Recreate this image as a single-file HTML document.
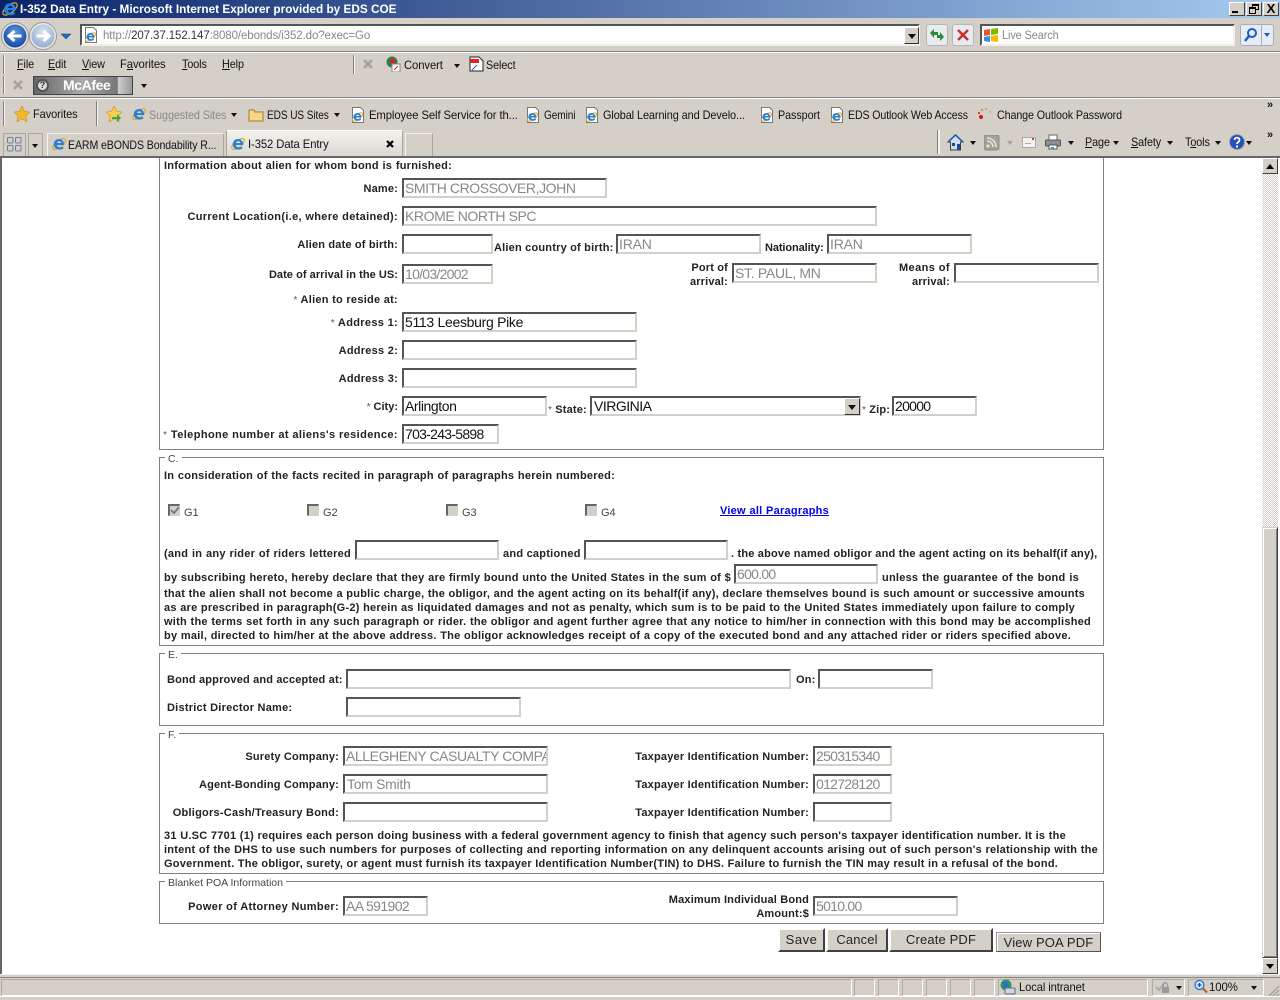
<!DOCTYPE html>
<html><head><meta charset="utf-8"><title>I-352 Data Entry</title>
<style>
html,body{margin:0;padding:0;width:1280px;height:1000px;overflow:hidden;background:#d4d0c8;font-family:"Liberation Sans",Arial,sans-serif}
div,span,a,svg{position:absolute;box-sizing:border-box}
u,b,i.n,em{position:static}
.c{position:absolute;left:2px;top:158px;width:1276px;height:816px;background:#fff}
.tb{font-size:12px;line-height:14px;color:#111;white-space:nowrap;letter-spacing:-.1px;transform:scaleX(.9);transform-origin:0 0}
.tb u{text-decoration:underline}
.l{font:bold 11px/14px "Liberation Sans",Arial,sans-serif;color:#222;white-space:nowrap;letter-spacing:.17px;margin-top:1px}
.r{left:0;text-align:right}
.j{text-align:justify;text-align-last:justify;letter-spacing:.24px}
.s{color:#555;font-weight:normal;font-size:10px}
.i{height:20px;background:#fff;border:2px solid #d4d0c8;border-top-color:#555;border-left-color:#555;font:14px/16px "Liberation Sans",Arial,sans-serif;color:#888;padding-left:1px;white-space:nowrap;overflow:hidden;letter-spacing:-.42px}
.i.k{color:#111}
.d{letter-spacing:-.72px}
.f{left:159px;width:945px;border:1px solid #808080;background:#fff}
.lg{background:#fff;font:10.500px/12px "Liberation Sans",Arial,sans-serif;color:#444;padding:0 3px;left:165px;white-space:nowrap}
.cb{width:12px;height:12px;background:#d4d0c8;border:1px solid #d4d0c8;border-top:2px solid #666;border-left:2px solid #666}
.g{font:11px/14px "Liberation Sans",Arial,sans-serif;color:#444}
.b{background:#d4d0c8;border:2px solid #fff;border-right-color:#404040;border-bottom-color:#404040;font:13px/19px "Liberation Sans",Arial,sans-serif;color:#222;text-align:center;letter-spacing:.15px}
.a{width:0;height:0;border:3px solid transparent;border-top:4px solid #111;border-bottom:0}
.w{top:2px;width:16px;height:14px;background:#d4d0c8;border:1px solid #fff;border-right-color:#404040;border-bottom-color:#404040;font:bold 12px/12px "Liberation Sans",Arial,sans-serif;color:#000;text-align:center}
.se{width:2px;background:#f4f3ef;border-left:1px solid #808080}
.p{top:979px;height:17px;border:1px solid #fff;border-top-color:#b0aca4;border-left-color:#b0aca4;background:#d4d0c8}
.ic{width:16px;height:16px}
</style></head><body>
<svg width="0" height="0" style="left:0;top:0"><defs>
<symbol id="e" viewBox="0 0 16 16"><ellipse cx="8" cy="8" rx="7.6" ry="3.4" transform="rotate(-38 8 8)" fill="none" stroke="#e0a52c" stroke-width="1.1"/><path fill-rule="evenodd" fill="#2a80d8" d="M2.8 8.6C2.6 5.4 5 3 8 3s5.300 2.400 5.200 6H6c.2 2.600 3.800 3 6.300 1.500v2C8 15 3 13 2.800 8.600zM6 7h4.400C10.200 4.600 6.400 4.600 6 7z"/></symbol>
<symbol id="pg" viewBox="0 0 16 16"><path d="M2.500.5h8l3 3v12h-11z" fill="#fff" stroke="#777"/><ellipse cx="7.500" cy="10" rx="6" ry="2.600" transform="rotate(-38 7.500 10)" fill="none" stroke="#e0a52c"/><path fill-rule="evenodd" fill="#2a80d8" d="M3.500 10C3.400 7.600 5.200 6 7.500 6s4 1.800 3.800 4.500H6c.2 1.800 2.800 2 4.800 1v1.500C7 15 3.600 13 3.500 10zM6 9h3.200C9 7.300 6.400 7.300 6 9z"/></symbol>
</defs></svg>

<!-- title bar -->
<div style="left:0;top:0;width:1280px;height:18px;background:linear-gradient(90deg,#0a246a,#a6caf0)"></div>
<svg style="left:1px;top:0;width:18px;height:18px"><use href="#e"/></svg>
<div style="left:20px;top:2px;font:bold 12px/14px 'Liberation Sans',sans-serif;color:#fff;white-space:nowrap;transform:scaleX(.982);transform-origin:0 0">I-352 Data Entry - Microsoft Internet Explorer provided by EDS COE</div>
<div class="w" style="left:1229px"><div style="left:2px;top:8px;width:6px;height:2px;background:#000"></div></div>
<div class="w" style="left:1246px"><div style="left:5px;top:1px;width:7px;height:6px;border:1px solid #000;border-top-width:2px"></div><div style="left:2px;top:4px;width:7px;height:7px;border:1px solid #000;border-top-width:2px;background:#d4d0c8"></div></div>
<div class="w" style="left:1263px;font-size:13px">X</div>

<!-- nav row -->
<svg style="left:0;top:20px" width="76" height="32"><defs><radialGradient id="bk" cx=".5" cy=".35" r=".7"><stop offset="0" stop-color="#5d9be0"/><stop offset="1" stop-color="#0f3f9c"/></radialGradient><radialGradient id="fw" cx=".5" cy=".35" r=".7"><stop offset="0" stop-color="#dbe6f3"/><stop offset="1" stop-color="#8ea9c9"/></radialGradient></defs>
<circle cx="15" cy="16" r="13.500" fill="#e9e9e9" stroke="#999"/><circle cx="15" cy="16" r="11.500" fill="url(#bk)"/><path d="M21.500 16H10m4.500-5l-5.500 5 5.500 5" stroke="#fff" stroke-width="3" fill="none"/>
<circle cx="43" cy="16" r="13.500" fill="#e9e9e9" stroke="#999"/><circle cx="43" cy="16" r="11.500" fill="url(#fw)"/><path d="M36.500 16H48m-4.500-5l5.500 5-5.500 5" stroke="#fff" stroke-width="3" fill="none"/>
<path d="M61 14h10l-5 5z" fill="#1e6fb8" stroke="#0b3d73" stroke-width=".5"/></svg>
<div style="left:80px;top:24px;width:840px;height:22px;background:#fff;border:2px solid #555;border-right-color:#f0efea;border-bottom-color:#f0efea"></div>
<svg class="ic" style="left:83px;top:27px"><use href="#pg"/></svg>
<div class="tb" style="left:103px;top:29px;color:#888;width:266px;font-size:11.500px;text-align-last:justify;transform:none">http://<span style="position:static;color:#333">207.37.152.147</span>:8080/ebonds/i352.do?exec=Go</div>
<div style="left:904px;top:27px;width:15px;height:17px;background:#d4d0c8;border:1px solid #fff;border-right-color:#333;border-bottom-color:#333"><div class="a" style="left:3px;top:6px;border-width:4px;border-top-width:5px;border-bottom:0"></div></div>
<div style="left:926px;top:24px;width:22px;height:22px;border:1px solid #b5b5b5;border-radius:3px;background:#e8ebf0"></div>
<svg class="ic" style="left:929px;top:27px"><path d="M1 6l4-4v3h4v3H5v3zM15 10l-4 4v-3H8V8h3V5z" fill="#2e8b35"/></svg>
<div style="left:952px;top:24px;width:22px;height:22px;border:1px solid #b5b5b5;border-radius:3px;background:#e8ebf0"></div>
<svg class="ic" style="left:955px;top:27px"><path d="M3 3l10 10M13 3L3 13" stroke="#c9302c" stroke-width="2.500"/></svg>
<div style="left:980px;top:24px;width:255px;height:22px;background:#fff;border:2px solid #555;border-right-color:#f0efea;border-bottom-color:#f0efea"></div>
<svg class="ic" style="left:983px;top:27px"><path d="M1 3l6-1v6l-6 1z" fill="#e4572e"/><path d="M8 2l7-1v6l-7 1z" fill="#7fba00"/><path d="M1 10l6-1v6l-6-1z" fill="#2f8fe0"/><path d="M8 9l7-1v7l-7-1z" fill="#f9b800"/></svg>
<div class="tb" style="left:1002px;top:29px;color:#888;font-size:11.500px;transform:scaleX(.95)">Live Search</div>
<div style="left:1240px;top:24px;width:34px;height:22px;border:1px solid #aab;border-radius:3px;background:#e6ecf5"></div>
<div style="left:1261px;top:24px;width:1px;height:22px;background:#aab"></div>
<svg class="ic" style="left:1243px;top:27px"><circle cx="9" cy="6" r="4" fill="none" stroke="#1a5fc0" stroke-width="2"/><path d="M6 9l-4 5" stroke="#1a5fc0" stroke-width="2.500"/></svg>
<div class="a" style="left:1264px;top:33px;border-top-color:#1a5fc0"></div>
<div style="left:0;top:51px;width:1280px;height:2px;background:#fff;border-top:1px solid #888"></div>

<!-- menu row -->
<div class="se" style="left:3px;top:55px;height:19px"></div>
<div class="tb" style="left:17px;top:57px"><u>F</u>ile</div>
<div class="tb" style="left:48px;top:57px"><u>E</u>dit</div>
<div class="tb" style="left:82px;top:57px"><u>V</u>iew</div>
<div class="tb" style="left:120px;top:57px;transform:scaleX(.94)">F<u>a</u>vorites</div>
<div class="tb" style="left:182px;top:57px"><u>T</u>ools</div>
<div class="tb" style="left:222px;top:57px"><u>H</u>elp</div>
<div class="se" style="left:353px;top:55px;height:19px"></div>
<svg class="ic" style="left:360px;top:57px"><path d="M4 3l8 8M12 3l-8 8" stroke="#a5a29b" stroke-width="2.500"/></svg>
<svg class="ic" style="left:386px;top:56px"><circle cx="6" cy="6" r="5.500" fill="#2f7d4f"/><rect x="4" y="3" width="5" height="4" fill="#d22"/><path d="M6 8h8v8H6z" fill="#fff" stroke="#888"/><path d="M8 14l4-4" stroke="#d22"/></svg>
<div class="tb" style="left:404px;top:58px;transform:scaleX(.94)">Convert</div>
<div class="a" style="left:454px;top:64px"></div>
<svg class="ic" style="left:469px;top:56px"><path d="M1 1h9l4 4v10H1z" fill="#fff" stroke="#222"/><rect x="1" y="3" width="9" height="4" fill="#d22"/><path d="M3 14l5-5" stroke="#35c"/></svg>
<div class="tb" style="left:486px;top:58px">Select</div>
<div class="se" style="left:3px;top:76px;height:18px"></div>
<svg class="ic" style="left:10px;top:78px"><path d="M4 3l8 8M12 3l-8 8" stroke="#a5a29b" stroke-width="2.500"/></svg>
<div style="left:33px;top:76px;width:100px;height:19px;background:linear-gradient(90deg,#666,#aaa 50%,#777 85%,#ccc 86%,#999);border:1px solid #444"></div>
<div style="left:36px;top:79px;width:13px;height:13px;border-radius:7px;background:#ddd;border:2px solid #555;font:bold 9px/9px 'Liberation Sans',sans-serif;color:#333;text-align:center">?</div>
<div style="left:63px;top:78px;font:bold 14px/15px 'Liberation Sans',sans-serif;color:#fff;letter-spacing:-.4px">McAfee</div>
<div class="a" style="left:141px;top:84px"></div>
<div style="left:0;top:97px;width:1280px;height:2px;background:#fff;border-top:1px solid #888"></div>

<!-- favorites row -->
<div class="se" style="left:3px;top:101px;height:25px"></div>
<svg class="ic" style="left:14px;top:106px"><path d="M8 0l2.400 5.400 5.600.6-4.200 3.800 1.200 5.900L8 12.800 3 15.700l1.200-5.900L0 6l5.600-.6z" fill="#f5b92e" stroke="#c58a10" stroke-width=".6"/></svg>
<div class="tb" style="left:33px;top:107px;transform:scaleX(.92)">Favorites</div>
<div class="se" style="left:96px;top:101px;height:25px"></div>
<svg class="ic" style="left:106px;top:106px"><path d="M8 0l2.400 5.400 5.600.6-4.200 3.800 1.200 5.900L8 12.800 3 15.700l1.200-5.900L0 6l5.600-.6z" fill="#f8d24c" stroke="#c58a10" stroke-width=".6"/><path d="M6 11h5V8l4 4-4 4v-3H6z" fill="#3da53d"/></svg>
<svg class="ic" style="left:131px;top:106px"><use href="#e"/></svg>
<div class="tb" style="left:149px;top:108px;color:#888">Suggested Sites</div>
<div class="a" style="left:231px;top:113px"></div>
<svg class="ic" style="left:248px;top:107px"><path d="M1 3h5l1 2h8v9H1z" fill="#f5d98a" stroke="#a27b20"/></svg>
<div class="tb" style="left:267px;top:108px;transform:scaleX(.84)">EDS US Sites</div>
<div class="a" style="left:334px;top:113px"></div>
<svg class="ic" style="left:350px;top:107px"><use href="#pg"/></svg>
<div class="tb" style="left:369px;top:108px;transform:scaleX(.94)">Employee Self Service for th...</div>
<svg class="ic" style="left:525px;top:107px"><use href="#pg"/></svg>
<div class="tb" style="left:544px;top:108px;transform:scaleX(.84)">Gemini</div>
<svg class="ic" style="left:584px;top:107px"><use href="#pg"/></svg>
<div class="tb" style="left:603px;top:108px;transform:scaleX(.91)">Global Learning and Develo...</div>
<svg class="ic" style="left:759px;top:107px"><use href="#pg"/></svg>
<div class="tb" style="left:778px;top:108px">Passport</div>
<svg class="ic" style="left:829px;top:107px"><use href="#pg"/></svg>
<div class="tb" style="left:848px;top:108px;transform:scaleX(.88)">EDS Outlook Web Access</div>
<svg class="ic" style="left:976px;top:106px"><circle cx="5" cy="11" r="2" fill="#e01010"/><circle cx="3" cy="7" r="1" fill="#e01010"/><circle cx="6" cy="4" r=".7" fill="#e01010"/><circle cx="10" cy="3" r=".6" fill="#e01010"/><circle cx="14" cy="6" r=".5" fill="#e01010"/></svg>
<div class="tb" style="left:997px;top:108px;transform:scaleX(.89)">Change Outlook Password</div>
<div style="left:1267px;top:99px;font:bold 11px/12px 'Liberation Sans',sans-serif;color:#111">»</div>

<!-- tab row -->
<div style="left:3px;top:133px;width:23px;height:23px;border:1px solid #aaa69e;border-bottom:0"></div>
<svg class="ic" style="left:6px;top:136px"><g fill="none" stroke="#6d7f9a"><rect x="1.500" y="1.500" width="5.500" height="5.500" rx="1"/><rect x="9.500" y="1.500" width="5.500" height="5.500" rx="1"/><rect x="1.500" y="9.500" width="5.500" height="5.500" rx="1"/><rect x="9.500" y="9.500" width="5.500" height="5.500" rx="1"/></g></svg>
<div style="left:28px;top:133px;width:15px;height:23px;border:1px solid #aaa69e;border-bottom:0"><div class="a" style="left:3px;top:10px"></div></div>
<div style="left:47px;top:133px;width:177px;height:23px;border:1px solid #aaa69e;border-top-color:#f3f2ee;border-left-color:#f3f2ee;border-bottom:0"></div>
<svg class="ic" style="left:51px;top:136px"><use href="#e"/></svg>
<div class="tb" style="left:68px;top:138px;transform:scaleX(.88)">EARM eBONDS Bondability R...</div>
<div style="left:226px;top:130px;width:177px;height:26px;background:linear-gradient(#f2f1ed,#dcd9d2);border:1px solid #aaa69e;border-top-color:#fff;border-bottom:0"></div>
<svg class="ic" style="left:230px;top:136px"><use href="#e"/></svg>
<div class="tb" style="left:248px;top:137px;transform:scaleX(.94)">I-352 Data Entry</div>
<svg class="ic" style="left:382px;top:136px"><path d="M5 5l6 6M11 5l-6 6" stroke="#000" stroke-width="2.200"/></svg>
<div style="left:405px;top:133px;width:28px;height:23px;border:1px solid #aaa69e;border-top-color:#f3f2ee;border-left-color:#f3f2ee;border-bottom:0"></div>

<div class="se" style="left:937px;top:130px;height:24px;width:3px"></div>
<svg class="ic" style="left:947px;top:134px;width:17px;height:17px"><path d="M8.500 1L1 8h2.500v8h10V8H16z" fill="#cfdcec" stroke="#345"/><path d="M1 8l7.500-7L16 8" fill="none" stroke="#2050b0" stroke-width="1.500"/><rect x="10" y="10" width="3" height="6" fill="#1c4a9c"/><rect x="5" y="9" width="3" height="3" fill="#346"/></svg>
<div class="a" style="left:970px;top:141px"></div>
<svg class="ic" style="left:984px;top:135px"><rect x="0" y="0" width="15" height="15" rx="2" fill="#a5a29b" stroke="#888"/><circle cx="4" cy="11" r="1.500" fill="#e6e4de"/><path d="M3 6a6 6 0 0 1 6 6M3 3a9 9 0 0 1 9 9" fill="none" stroke="#e6e4de" stroke-width="1.500"/></svg>
<div class="a" style="left:1007px;top:141px;border-top-color:#a5a29b"></div>
<div style="left:1022px;top:137px;width:14px;height:11px;background:#f4f3ef;border:1px solid #aaa"></div>
<div style="left:1032px;top:138px;width:2px;height:2px;background:#d33"></div>
<div style="left:1025px;top:143px;width:6px;height:1px;background:#aaa"></div>
<svg class="ic" style="left:1045px;top:134px"><rect x="4" y="1" width="8" height="5" fill="#fff" stroke="#666"/><rect x="0.500" y="6" width="15" height="6" rx="1" fill="#8b8f94" stroke="#555"/><rect x="4" y="11" width="8" height="4" fill="#fff" stroke="#555"/><rect x="6" y="13" width="3" height="2" fill="#2a9ac0"/></svg>
<div class="a" style="left:1068px;top:141px"></div>
<div class="tb" style="left:1085px;top:135px"><u>P</u>age</div><div class="a" style="left:1113px;top:141px"></div>
<div class="tb" style="left:1131px;top:135px"><u>S</u>afety</div><div class="a" style="left:1167px;top:141px"></div>
<div class="tb" style="left:1185px;top:135px">T<u>o</u>ols</div><div class="a" style="left:1215px;top:141px"></div>
<svg class="ic" style="left:1229px;top:134px"><circle cx="8" cy="8" r="7.500" fill="#2450b8" stroke="#9aa"/><path d="M5.500 6c0-3.200 5-3.200 5 0 0 2-2.500 2-2.500 4" fill="none" stroke="#fff" stroke-width="1.800"/><rect x="7" y="11.500" width="2" height="2" fill="#fff"/></svg>
<div class="a" style="left:1246px;top:141px"></div>
<div style="left:1267px;top:129px;font:bold 11px/12px 'Liberation Sans',sans-serif;color:#111">»</div>
<div style="left:0;top:156px;width:1280px;height:2px;background:#666"></div>

<!-- content -->
<div style="left:0;top:158px;width:2px;height:817px;background:#666"></div>
<div class="c"></div>
<div style="left:1278px;top:158px;width:2px;height:817px;background:#fff"></div>

<!-- fieldsets -->
<div class="f" style="top:158px;height:292px;border-top:0"></div>
<div class="f" style="top:457px;height:189px"></div>
<div class="f" style="top:653px;height:73px"></div>
<div class="f" style="top:733px;height:141px"></div>
<div class="f" style="top:881px;height:43px"></div>
<div class="lg" style="top:453px">C.</div>
<div class="lg" style="top:649px">E.</div>
<div class="lg" style="top:729px">F.</div>
<div class="lg" style="top:877px">Blanket POA Information</div>

<!-- section: alien -->
<div class="l j" style="left:164px;top:158px;width:288px">Information about alien for whom bond is furnished:</div>
<div class="l r" style="top:181px;width:398px">Name:</div>
<div class="i" style="left:402px;top:178px;width:205px">SMITH CROSSOVER,JOHN</div>
<div class="l r" style="top:209px;width:398px;letter-spacing:.33px">Current Location(i.e, where detained):</div>
<div class="i" style="left:402px;top:206px;width:475px">KROME NORTH SPC</div>
<div class="l r" style="top:237px;width:398px">Alien date of birth:</div>
<div class="i" style="left:402px;top:234px;width:91px"></div>
<div class="l" style="left:494px;top:240px;letter-spacing:.2px">Alien country of birth:</div>
<div class="i" style="left:616px;top:234px;width:145px;letter-spacing:-.2px">IRAN</div>
<div class="l" style="left:765px;top:240px;letter-spacing:-.1px">Nationality:</div>
<div class="i" style="left:827px;top:234px;width:145px;letter-spacing:-.2px">IRAN</div>
<div class="l r" style="top:267px;width:398px;letter-spacing:.05px">Date of arrival in the US:</div>
<div class="i d" style="left:402px;top:264px;width:91px">10/03/2002</div>
<div class="l r" style="top:260px;width:728px">Port of</div>
<div class="l r" style="top:274px;width:728px">arrival:</div>
<div class="i" style="left:732px;top:263px;width:145px;letter-spacing:-.3px">ST. PAUL, MN</div>
<div class="l r" style="top:260px;width:950px;letter-spacing:.42px">Means of</div>
<div class="l r" style="top:274px;width:950px">arrival:</div>
<div class="i" style="left:954px;top:263px;width:145px"></div>
<div class="l r" style="top:292px;width:398px;letter-spacing:.27px"><span class="s" style="position:static">*</span> Alien to reside at:</div>
<div class="l r" style="top:315px;width:398px;letter-spacing:.32px"><span class="s" style="position:static">*</span> Address 1:</div>
<div class="i k" style="left:402px;top:312px;width:235px;letter-spacing:-.3px">5113 Leesburg Pike</div>
<div class="l r" style="top:343px;width:398px;letter-spacing:.25px">Address 2:</div>
<div class="i" style="left:402px;top:340px;width:235px"></div>
<div class="l r" style="top:371px;width:398px;letter-spacing:.25px">Address 3:</div>
<div class="i" style="left:402px;top:368px;width:235px"></div>
<div class="l r" style="top:399px;width:398px;letter-spacing:0"><span class="s" style="position:static">*</span> City:</div>
<div class="i k" style="left:402px;top:396px;width:145px">Arlington</div>
<div class="l" style="left:548px;top:402px"><span class="s" style="position:static">*</span> State:</div>
<div class="i k" style="left:590px;top:396px;width:271px;padding-left:2px;letter-spacing:-.5px">VIRGINIA</div>
<div style="left:844px;top:398px;width:16px;height:17px;background:#d4d0c8;border:1px solid #fff;border-right-color:#333;border-bottom-color:#333"><div class="a" style="left:3px;top:6px;border-width:4px;border-top-width:5px;border-bottom:0"></div></div>
<div class="l" style="left:862px;top:402px"><span class="s" style="position:static">*</span> Zip:</div>
<div class="i k d" style="left:892px;top:396px;width:85px">20000</div>
<div class="l r" style="top:427px;width:398px;letter-spacing:.4px"><span class="s" style="position:static">*</span> Telephone number at aliens's residence:</div>
<div class="i k d" style="left:402px;top:424px;width:97px">703-243-5898</div>

<!-- section C -->
<div class="l j" style="left:164px;top:468px;width:451px">In consideration of the facts recited in paragraph of paragraphs herein numbered:</div>
<div class="cb" style="left:168px;top:504px"></div>
<svg style="left:170px;top:506px" width="10" height="10"><path d="M1 4l3 3 5-6" fill="none" stroke="#777" stroke-width="1.800"/></svg>
<div class="g" style="left:184px;top:506px">G1</div>
<div class="cb" style="left:307px;top:504px"></div><div class="g" style="left:323px;top:506px">G2</div>
<div class="cb" style="left:446px;top:504px"></div><div class="g" style="left:462px;top:506px">G3</div>
<div class="cb" style="left:585px;top:504px"></div><div class="g" style="left:601px;top:506px">G4</div>
<a class="l j" style="left:720px;top:503px;width:109px;color:#00e;text-decoration:underline">View all Paragraphs</a>
<div class="l j" style="left:164px;top:546px;width:187px">(and in any rider of riders lettered</div>
<div class="i" style="left:355px;top:540px;width:144px"></div>
<div class="l j" style="left:503px;top:546px;width:77px">and captioned</div>
<div class="i" style="left:584px;top:540px;width:144px"></div>
<div class="l j" style="left:731px;top:546px;width:366px;letter-spacing:.19px">. the above named obligor and the agent acting on its behalf(if any),</div>
<div class="l j" style="left:164px;top:570px;width:567px">by subscribing hereto, hereby declare that they are firmly bound unto the United States in the sum of $</div>
<div class="i d" style="left:734px;top:564px;width:144px">600.00</div>
<div class="l j" style="left:882px;top:570px;width:197px">unless the guarantee of the bond is</div>
<div class="l j" style="left:164px;top:586px;width:921px">that the alien shall not become a public charge, the obligor, and the agent acting on its behalf(if any), declare themselves bound is such amount or successive amounts</div>
<div class="l j" style="left:164px;top:600px;width:911px">as are prescribed in paragraph(G-2) herein as liquidated damages and not as penalty, which sum is to be paid to the United States immediately upon failure to comply</div>
<div class="l j" style="left:164px;top:614px;width:927px">with the terms set forth in any such paragraph or rider. the obligor and agent further agree that any notice to him/her in connection with this bond may be accomplished</div>
<div class="l j" style="left:164px;top:628px;width:907px">by mail, directed to him/her at the above address. The obligor acknowledges receipt of a copy of the executed bond and any attached rider or riders specified above.</div>

<!-- section E -->
<div class="l j" style="left:167px;top:672px;width:175px;letter-spacing:.17px">Bond approved and accepted at:</div>
<div class="i" style="left:346px;top:669px;width:445px"></div>
<div class="l" style="left:796px;top:672px">On:</div>
<div class="i" style="left:818px;top:669px;width:115px"></div>
<div class="l j" style="left:167px;top:700px;width:124px">District Director Name:</div>
<div class="i" style="left:346px;top:697px;width:175px"></div>

<!-- section F -->
<div class="l r" style="top:749px;width:339px">Surety Company:</div>
<div class="i" style="left:343px;top:746px;width:205px">ALLEGHENY CASUALTY COMPANY</div>
<div class="l r" style="top:777px;width:339px">Agent-Bonding Company:</div>
<div class="i" style="left:343px;top:774px;width:205px;padding-left:2px;letter-spacing:-.3px">Tom Smith</div>
<div class="l r" style="top:805px;width:339px;letter-spacing:.24px">Obligors-Cash/Treasury Bond:</div>
<div class="i" style="left:343px;top:802px;width:205px"></div>
<div class="l r" style="top:749px;width:809px;letter-spacing:.21px">Taxpayer Identification Number:</div>
<div class="i d" style="left:813px;top:746px;width:79px">250315340</div>
<div class="l r" style="top:777px;width:809px;letter-spacing:.21px">Taxpayer Identification Number:</div>
<div class="i d" style="left:813px;top:774px;width:79px">012728120</div>
<div class="l r" style="top:805px;width:809px;letter-spacing:.21px">Taxpayer Identification Number:</div>
<div class="i" style="left:813px;top:802px;width:79px"></div>
<div class="l j" style="left:164px;top:828px;width:902px">31 U.SC 7701 (1) requires each person doing business with a federal government agency to finish that agency such person's taxpayer identification number. It is the</div>
<div class="l j" style="left:164px;top:842px;width:934px">intent of the DHS to use such numbers for purposes of collecting and reporting information on any delinquent accounts arising out of such person's relationship with the</div>
<div class="l j" style="left:164px;top:856px;width:894px">Government. The obligor, surety, or agent must furnish its taxpayer Identification Number(TIN) to DHS. Failure to furnish the TIN may result in a refusal of the bond.</div>

<!-- POA -->
<div class="l r" style="top:899px;width:339px;letter-spacing:.33px">Power of Attorney Number:</div>
<div class="i" style="left:343px;top:896px;width:85px;letter-spacing:-.6px">AA 591902</div>
<div class="l r" style="top:892px;width:809px">Maximum Individual Bond</div>
<div class="l r" style="top:906px;width:809px">Amount:$</div>
<div class="i d" style="left:813px;top:896px;width:145px">5010.00</div>

<!-- buttons -->
<div class="b" style="left:778px;top:928px;width:47px;height:24px;letter-spacing:.5px">Save</div>
<div class="b" style="left:826px;top:928px;width:62px;height:24px">Cancel</div>
<div class="b" style="left:889px;top:928px;width:104px;height:24px">Create PDF</div>
<div class="b" style="left:996px;top:932px;width:105px;height:20px;border-width:1px;line-height:20px;border-color:#999 #555 #555 #999;box-shadow:inset 1px 1px 0 #fff">View POA PDF</div>

<!-- scrollbar -->
<div style="left:1262px;top:158px;width:16px;height:816px;background:repeating-conic-gradient(#d4d0c8 0 25%,#fff 0 50%) 0 0/2px 2px"></div>
<div style="left:1262px;top:158px;width:16px;height:16px;background:#d4d0c8;border:1px solid #fff;border-right-color:#404040;border-bottom-color:#404040"><div class="a" style="left:3px;top:5px;border:4px solid transparent;border-bottom:5px solid #000;border-top:0"></div></div>
<div style="left:1262px;top:527px;width:16px;height:431px;background:#d4d0c8;border:1px solid #d4d0c8;border-right-color:#404040;border-bottom-color:#404040;box-shadow:inset 1px 1px 0 #fff,inset -1px -1px 0 #808080"></div>
<div style="left:1262px;top:958px;width:16px;height:16px;background:#d4d0c8;border:1px solid #fff;border-right-color:#404040;border-bottom-color:#404040"><div class="a" style="left:3px;top:5px;border:4px solid transparent;border-top:5px solid #000;border-bottom:0"></div></div>

<!-- status bar -->
<div style="left:0;top:974px;width:1280px;height:26px;background:#d4d0c8;border-top:1px solid #f4f3ef"></div>
<div style="left:0;top:977px;width:1280px;height:1px;background:#888"></div>
<div class="p" style="left:1px;width:851px"></div>
<div class="p" style="left:854px;width:21px"></div>
<div class="p" style="left:878px;width:21px"></div>
<div class="p" style="left:902px;width:21px"></div>
<div class="p" style="left:926px;width:21px"></div>
<div class="p" style="left:950px;width:21px"></div>
<div class="p" style="left:974px;width:21px"></div>
<div class="p" style="left:998px;width:150px"></div>
<div class="p" style="left:1152px;width:33px"></div>
<div class="p" style="left:1188px;width:76px"></div>
<svg class="ic" style="left:1000px;top:979px"><circle cx="6" cy="6" r="5.500" fill="#2a9a5a"/><path d="M2 3l6 0 1 4-5 2z" fill="#2a70c8"/><rect x="5" y="9" width="10" height="6" rx="1" fill="#cfd6e6" stroke="#667"/></svg>
<div class="tb" style="left:1019px;top:980px;transform:scaleX(.93)">Local intranet</div>
<svg class="ic" style="left:1155px;top:979px"><path d="M1 8l3 3 6-8" fill="none" stroke="#aaa" stroke-width="2"/><rect x="7" y="8" width="7" height="6" fill="#999"/><path d="M8.500 8V6a2 2 0 0 1 4 0v2" fill="none" stroke="#999" stroke-width="1.300"/></svg>
<div class="a" style="left:1176px;top:986px"></div>
<svg class="ic" style="left:1193px;top:979px"><circle cx="6.500" cy="6" r="4.500" fill="#cfe2f7" stroke="#2a70c8" stroke-width="1.300"/><path d="M4.500 6h4M6.500 4v4" stroke="#1a4fb0" stroke-width="1.300"/><path d="M10 9.500l4 4" stroke="#a86a28" stroke-width="2.200"/></svg>
<div class="tb" style="left:1209px;top:980px;transform:scaleX(.95)">100%</div>
<div class="a" style="left:1251px;top:986px"></div>
<svg style="left:1267px;top:985px" width="13" height="12"><path d="M12 1L1 12M12 5L5 12M12 9l-3 3" stroke="#999" stroke-width="1.200"/></svg>
<div style="left:0;top:996px;width:1280px;height:1px;background:#fff"></div>
</body></html>
